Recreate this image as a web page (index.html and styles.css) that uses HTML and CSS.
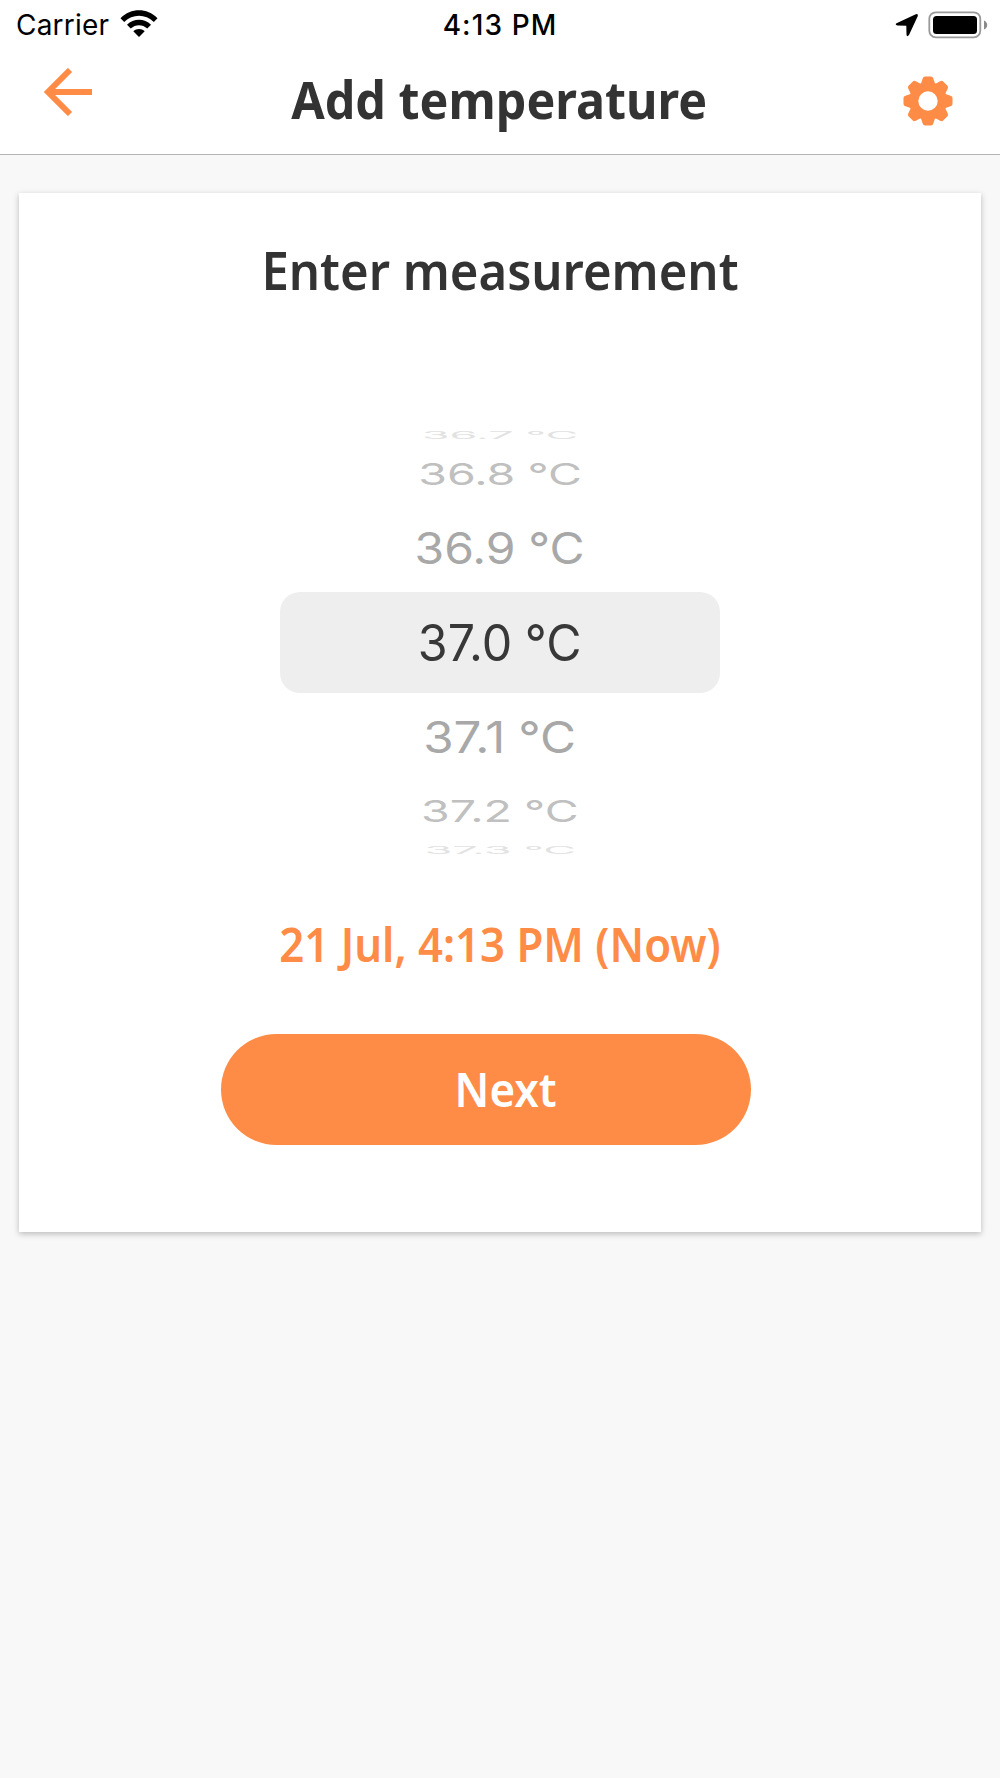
FILE: index.html
```html
<!DOCTYPE html>
<html lang="en">
<head>
    <meta charset="UTF-8">
    <title>Add temperature</title>
    <link rel="stylesheet" href="styles.css">
</head>
<body>
    <header class="header">
        <div class="status-bar">
            <div class="status-left">
                <span class="carrier">Carrier</span>
                <svg class="wifi" viewBox="0 0 38 28" width="38" height="28">
                    <path d="M0.500 8.200C11 -2.400 27 -2.400 37.500 8.200L33.800 12C25.500 3.600 12.500 3.600 4.200 12Z"/>
                    <path d="M7 14.800C13.500 8.200 24.500 8.200 31 14.800L27.300 18.500C22.500 14 15.500 14 10.700 18.500Z"/>
                    <path d="M13.300 21.200C16.500 18.200 21.500 18.200 24.700 21.200L19 27Z"/>
                </svg>
            </div>
            <span class="time">4:13 PM</span>
            <div class="status-right">
                <svg class="location" viewBox="0 0 24 24" width="24" height="24">
                    <path d="M1.500 10.200L20.800 1.200Q23.400 0.500 22.700 3.200L14 22Q11.800 24.500 11.500 21.500L11.300 12.800L2.500 12.500Q-0.500 11.800 1.500 10.200Z"/>
                </svg>
                <svg class="battery" viewBox="0 0 60 28" width="60" height="28">
                    <rect x="1.300" y="1.300" width="51" height="25" rx="6.500" fill="#fff" stroke="#999" stroke-width="1.800"/>
                    <rect x="5" y="5" width="44" height="18" rx="3.500"/>
                    <path d="M56 9.500Q59.200 11 59.200 14T56 18.500Z" fill="#8a8a8a"/>
                </svg>
            </div>
        </div>
        <div class="nav-bar">
            <svg class="back" viewBox="0 0 48 48" width="48" height="48">
                <path d="M48 24H6M26 2L4 24L26 46" fill="none" stroke="#ff8c46" stroke-width="6"/>
            </svg>
            <h1 class="title">Add temperature</h1>
            <svg class="settings" viewBox="-25 -25 50 50" width="50" height="50">
                <g id="teeth">
                    <path id="tooth" d="M-7.500 -16L-5.300 -22.500Q-4.800 -24.500 -3 -24.500H3Q4.800 -24.500 5.300 -22.500L7.500 -16Z"/>
                    <use href="#tooth" transform="rotate(45)"/>
                    <use href="#tooth" transform="rotate(90)"/>
                    <use href="#tooth" transform="rotate(135)"/>
                </g>
                <use href="#teeth" transform="rotate(180)"/>
                <circle r="14.300" fill="none" stroke="#ff8c46" stroke-width="9.200"/>
            </svg>
        </div>
    </header>

    <main class="card">
        <h2 class="heading">Enter measurement</h2>
        <div class="picker">
            <div class="row far first"><span>36.7 °C</span></div>
            <div class="row mid"><span>36.8 °C</span></div>
            <div class="row near"><span>36.9 °C</span></div>
            <div class="row selected"><span>37.0 °C</span></div>
            <div class="row near below"><span>37.1 °C</span></div>
            <div class="row mid"><span>37.2 °C</span></div>
            <div class="row far"><span>37.3 °C</span></div>
        </div>
        <div class="date">21 Jul, 4:13 PM (Now)</div>
        <button class="next"><span>Next</span></button>
    </main>
</body>
</html>
```
FILE: styles.css
```css
* {
    box-sizing: border-box;
}
body {
    margin: 0;
    min-height: 1778px;
    background-color: #f8f8f8;
    color: #333;
    font-family: "Noto Sans", sans-serif;
}
.header {
    height: 155px;
    background-color: #fff;
    border-bottom: 1px solid #b4b4b4;
}
.status-bar {
    display: grid;
    grid-template-columns: 1fr auto 1fr;
    align-items: center;
    height: 50px;
    padding: 0 12px 0 16px;
    color: #000;
    font-family: "Inter", sans-serif;
    font-size: 28px;
}
.status-left, .status-right {
    display: flex;
    align-items: center;
}
.status-left {
    gap: 11px;
}
.status-right {
    justify-content: flex-end;
    gap: 9px;
}
.wifi {
    margin-bottom: 2px;
}
.carrier {
    letter-spacing: 0.2px;
}
.time {
    margin-right: 4px;
    font-weight: 500;
    letter-spacing: 1.1px;
}
.nav-bar {
    display: flex;
    justify-content: space-between;
    padding: 18px 47px 0 44px;
}
.title {
    margin: 0 0 0 4px;
    font-size: 52px;
    line-height: 62px;
    font-weight: 700;
    transform: scaleX(0.932);
}
.settings {
    margin-top: 8px;
    fill: #ff8c46;
}
.card {
    width: 962px;
    height: 1039px;
    margin: 38px auto 0;
    padding-top: 46px;
    background-color: #fff;
    box-shadow: 0 2px 6px rgba(0, 0, 0, 0.25);
}
.heading {
    margin: 0;
    font-size: 52px;
    line-height: 62px;
    font-weight: 600;
    text-align: center;
    transform: scaleX(0.943);
}
/* wheel picker, rows get flatter away from the middle */
.picker {
    width: 440px;
    margin: 123px auto 0;
    font-family: "Inter", sans-serif;
    font-size: 50px;
    word-spacing: -1px;
}
.row {
    display: flex;
    align-items: center;
    justify-content: center;
    white-space: nowrap;
}
.far {
    height: 18px;
    color: #e2e2e2;
}
.far span {
    transform: scale(0.9, 0.2);
}
.first {
    height: 20px;
    padding-top: 1px;
}
.mid {
    height: 60px;
    color: #c0c0c0;
}
.mid span {
    transform: scale(0.93, 0.6);
}
.near {
    height: 88px;
    color: #a8a8a8;
}
.near span {
    transform: scale(0.96, 0.88);
}
.below span {
    transform: scale(0.985, 0.88);
}
.selected {
    height: 101px;
    border-radius: 20px;
    background-color: #eee;
    color: #383838;
}
.selected span {
    transform: scaleX(0.967);
}
.date {
    margin-top: 55px;
    color: #ff8c46;
    font-size: 47px;
    line-height: 60px;
    font-weight: 600;
    text-align: center;
    transform: scaleX(0.93);
}
.next {
    display: block;
    width: 530px;
    height: 111px;
    margin: 60px 0 0 202px;
    padding: 0 0 2px 40px;
    border: 0;
    border-radius: 56px;
    background-color: #ff8c46;
    color: #fff;
    font-family: inherit;
    font-size: 47px;
    font-weight: 600;
}
.next span {
    display: inline-block;
    transform: scaleX(0.935);
}
```
